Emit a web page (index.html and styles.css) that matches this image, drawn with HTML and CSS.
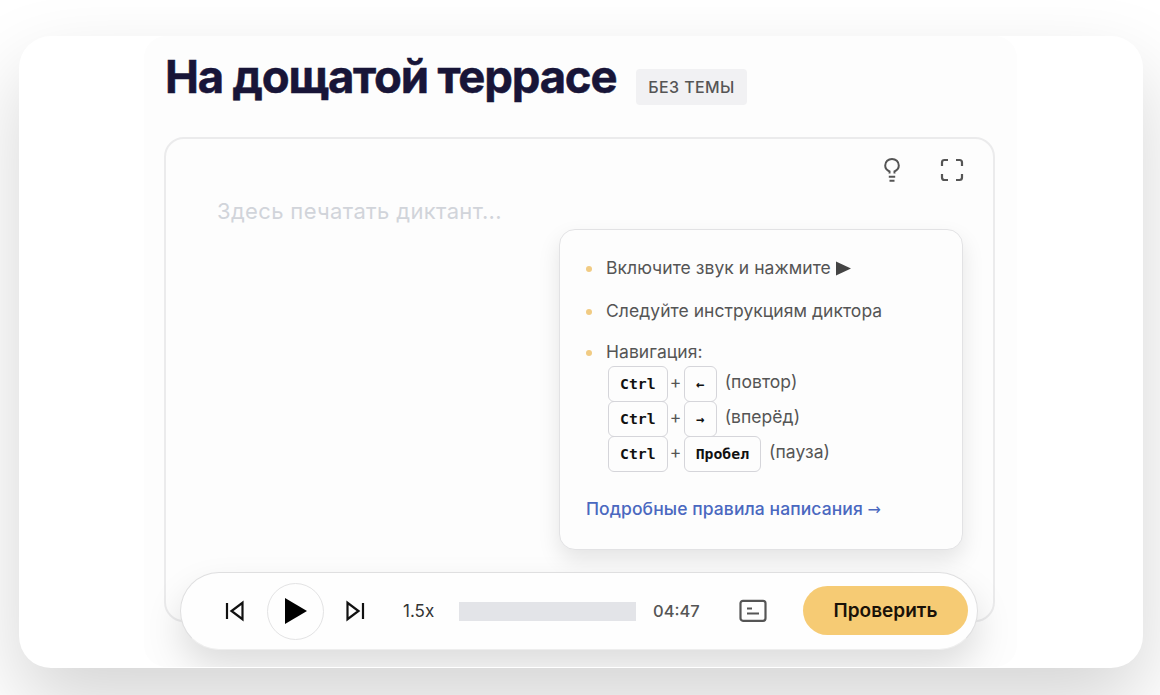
FILE: index.html
```
<!DOCTYPE html>
<html lang="ru">
<head>
  <meta charset="UTF-8">
  <meta name="viewport" content="width=device-width, initial-scale=1.0">
  <title>На дощатой террасе</title>
  <link rel="stylesheet" href="styles.css">
</head>
<body>
  <div class="card">
    <main class="dictation">
      <header class="header">
        <h1>На дощатой террасе</h1>
        <span class="topic">БЕЗ ТЕМЫ</span>
      </header>

      <section class="editor">
        <div class="editor-tools">
          <button class="icon-btn" title="Подсказка">
            <svg width="24" height="28" viewBox="0 0 24 28" fill="none" stroke="#555" stroke-width="2">
              <path d="M9.500 17.600V15.500C7 14.300 5.200 12.200 5.200 9.500a6.800 6.600 0 0 1 13.600 0c0 2.700-1.800 4.800-4.300 6v2.100"/>
              <path d="M8.800 20.700h6.400M9.500 24.800h5"/>
            </svg>
          </button>
          <button class="icon-btn" title="На весь экран">
            <svg width="24" height="24" viewBox="0 0 24 24" fill="none" stroke="#555" stroke-width="2.200">
              <path d="M2 8V4.500Q2 2 4.500 2H8M16 2h3.500Q22 2 22 4.500V8M22 16v3.500q0 2.500-2.500 2.500H16M8 22H4.500Q2 22 2 19.500V16"/>
            </svg>
          </button>
        </div>
        <div class="placeholder">Здесь печатать диктант...</div>

        <div class="hint">
          <ul>
            <li>Включите звук и нажмите
              <svg class="hint-play" width="15" height="15" viewBox="0 0 15 15" fill="#444"><path d="M0 0.500L15 7.500L0 14.500z"/></svg>
            </li>
            <li>Следуйте инструкциям диктора</li>
            <li>Навигация:
              <div class="keys"><kbd>Ctrl</kbd><i>+</i><kbd class="arrow">←</kbd><span>(повтор)</span></div>
              <div class="keys"><kbd>Ctrl</kbd><i>+</i><kbd class="arrow">→</kbd><span>(вперёд)</span></div>
              <div class="keys"><kbd>Ctrl</kbd><i>+</i><kbd>Пробел</kbd><span>(пауза)</span></div>
            </li>
          </ul>
          <a class="rules" href="#">Подробные правила написания <span>→</span></a>
        </div>
      </section>

      <div class="player">
        <button class="icon-btn prev" title="Назад">
          <svg width="20" height="22" viewBox="0 0 20 22" fill="none" stroke="#111" stroke-width="2.200">
            <path d="M2 3v16M17.500 2.800v16.400L6.500 11z"/>
          </svg>
        </button>
        <button class="play" title="Воспроизвести">
          <svg width="22" height="28" viewBox="0 0 22 28"><path d="M0 1L22 14L0 27z"/></svg>
        </button>
        <button class="icon-btn next" title="Вперёд">
          <svg width="20" height="22" viewBox="0 0 20 22" fill="none" stroke="#111" stroke-width="2.200">
            <path d="M18 3v16M2.500 2.800v16.400L13.500 11z"/>
          </svg>
        </button>
        <span class="speed">1.5x</span>
        <div class="track"></div>
        <span class="time">04:47</span>
        <button class="icon-btn captions" title="Субтитры">
          <svg width="28" height="24" viewBox="0 0 28 24" fill="none" stroke="#555" stroke-width="2.200">
            <rect x="1.500" y="1.800" width="25" height="20" rx="2.500"/>
            <path d="M8 9.500h5M8 14.500h12" stroke-width="1.800"/>
          </svg>
        </button>
        <button class="check">Проверить</button>
      </div>
    </main>
  </div>
</body>
</html>
```
FILE: styles.css
```
:root {
  --accent: #f6cb74;
  --dark: #181538;
  --text: #555;
  --line: #ebebec;
}

* {
  box-sizing: border-box;
  margin: 0;
  padding: 0;
}

body {
  font-family: Inter, sans-serif;
  color: var(--text);
  background: #fff;
  height: 695px;
  padding: 36px 17px 27px 19px;
  overflow: hidden;
}

button {
  font-family: inherit;
  border: none;
  background: none;
}

svg {
  display: block;
}

.card {
  height: 632px;
  background: #fff;
  border-radius: 32px;
  box-shadow: 0 36px 80px rgba(0, 0, 0, 0.17);
  padding: 0 126px 1px 125px;
}

.dictation {
  height: 631px;
  background: #fdfdfd;
  border-radius: 22px;
  padding: 0 22px 0 20px;
  overflow: hidden;
}

.header {
  display: flex;
  height: 101px;
  white-space: nowrap;
}

h1 {
  width: 472px;
  padding: 13px 0 0 1px;
  font-size: 45.500px;
  line-height: 56px;
  font-weight: 750;
  letter-spacing: -1.200px;
  color: var(--dark);
  -webkit-text-stroke: 0.500px var(--dark);
}

.topic {
  width: 111px;
  height: 36px;
  margin-top: 33px;
  background: #f1f1f3;
  border-radius: 4px;
  font-size: 16px;
  font-weight: 500;
  line-height: 36px;
  letter-spacing: 0.400px;
  text-align: center;
}

.editor {
  position: relative;
  height: 485px;
  border: 2px solid var(--line);
  border-radius: 20px;
}

.editor-tools {
  display: flex;
  justify-content: flex-end;
  align-items: center;
  gap: 36px;
  height: 60px;
  padding: 2px 29px 0 0;
}

.placeholder {
  padding-left: 51px;
  font-size: 22px;
  line-height: 24px;
  letter-spacing: 0.350px;
  color: #d1d4da;
}

/* Подсказка поверх поля ввода */
.hint {
  position: absolute;
  top: 90px;
  right: 30px;
  width: 404px;
  height: 321px;
  padding: 26px 26px 0;
  background: #fdfdfd;
  border: 1.500px solid #e2e2e4;
  border-radius: 16px;
  box-shadow: 0 10px 22px rgba(0, 0, 0, 0.1);
}

.hint ul {
  list-style: none;
}

.hint li {
  position: relative;
  padding-left: 20px;
  margin-bottom: 18px;
  font-size: 17.500px;
  line-height: 24px;
  letter-spacing: 0.050px;
  white-space: nowrap;
}

.hint li:first-child {
  margin-bottom: 19px;
}

.hint li:nth-child(2) {
  margin-bottom: 17px;
}

.hint li::before {
  content: "";
  position: absolute;
  left: 0;
  top: 10px;
  width: 6px;
  height: 6px;
  border-radius: 50%;
  background: #f1cb83;
}

.hint-play {
  display: inline-block;
  vertical-align: -2px;
}

.keys {
  position: relative;
  top: 2px;
  display: flex;
  height: 35px;
  padding-left: 2px;
}

.keys i {
  width: 16px;
  font-style: normal;
  line-height: 32px;
  text-align: center;
}

.keys span {
  padding-left: 8px;
  line-height: 32px;
}

kbd {
  height: 36px;
  padding: 0 11px;
  border: 1.500px solid #d5d5da;
  border-radius: 6px;
  font-family: "DejaVu Sans Mono", monospace;
  font-size: 14.800px;
  font-weight: 700;
  line-height: 34px;
  letter-spacing: 0;
  color: #111;
}

kbd.arrow {
  width: 33px;
  padding: 0;
  font-size: 14px;
  text-align: center;
}

.rules {
  display: block;
  margin-top: 28px;
  font-size: 17.500px;
  font-weight: 500;
  line-height: 24px;
  letter-spacing: 0.080px;
  color: #4a68c0;
  text-decoration: none;
  white-space: nowrap;
}

.rules span {
  font-family: "DejaVu Sans", sans-serif;
  font-size: 16px;
  line-height: 1;
}

.player {
  position: relative;
  display: flex;
  align-items: center;
  width: 798px;
  height: 78px;
  margin: -50px 0 0 16px;
  padding: 0 9px 0 44px;
  background: #fefefe;
  border: 1px solid #dfdfe0;
  border-bottom-color: #eee;
  border-radius: 39px;
  box-shadow: 0 18px 36px rgba(0, 0, 0, 0.13);
}

.play {
  display: flex;
  align-items: center;
  justify-content: center;
  width: 57px;
  height: 57px;
  margin: 0 21px 0 22px;
  border: 1px solid #e3e3e4;
  border-radius: 50%;
}

.speed {
  width: 56px;
  margin-left: 38px;
  font-size: 17px;
  color: #333;
}

.track {
  width: 177px;
  height: 19px;
  background: #e3e4e8;
}

.time {
  width: 103px;
  padding-left: 17px;
  font-size: 16.500px;
  font-weight: 500;
}

.check {
  width: 165px;
  height: 49px;
  margin: -2px 0 0 auto;
  background: var(--accent);
  border-radius: 25px;
  font-size: 19px;
  font-weight: 600;
  color: #1a1208;
}
```
